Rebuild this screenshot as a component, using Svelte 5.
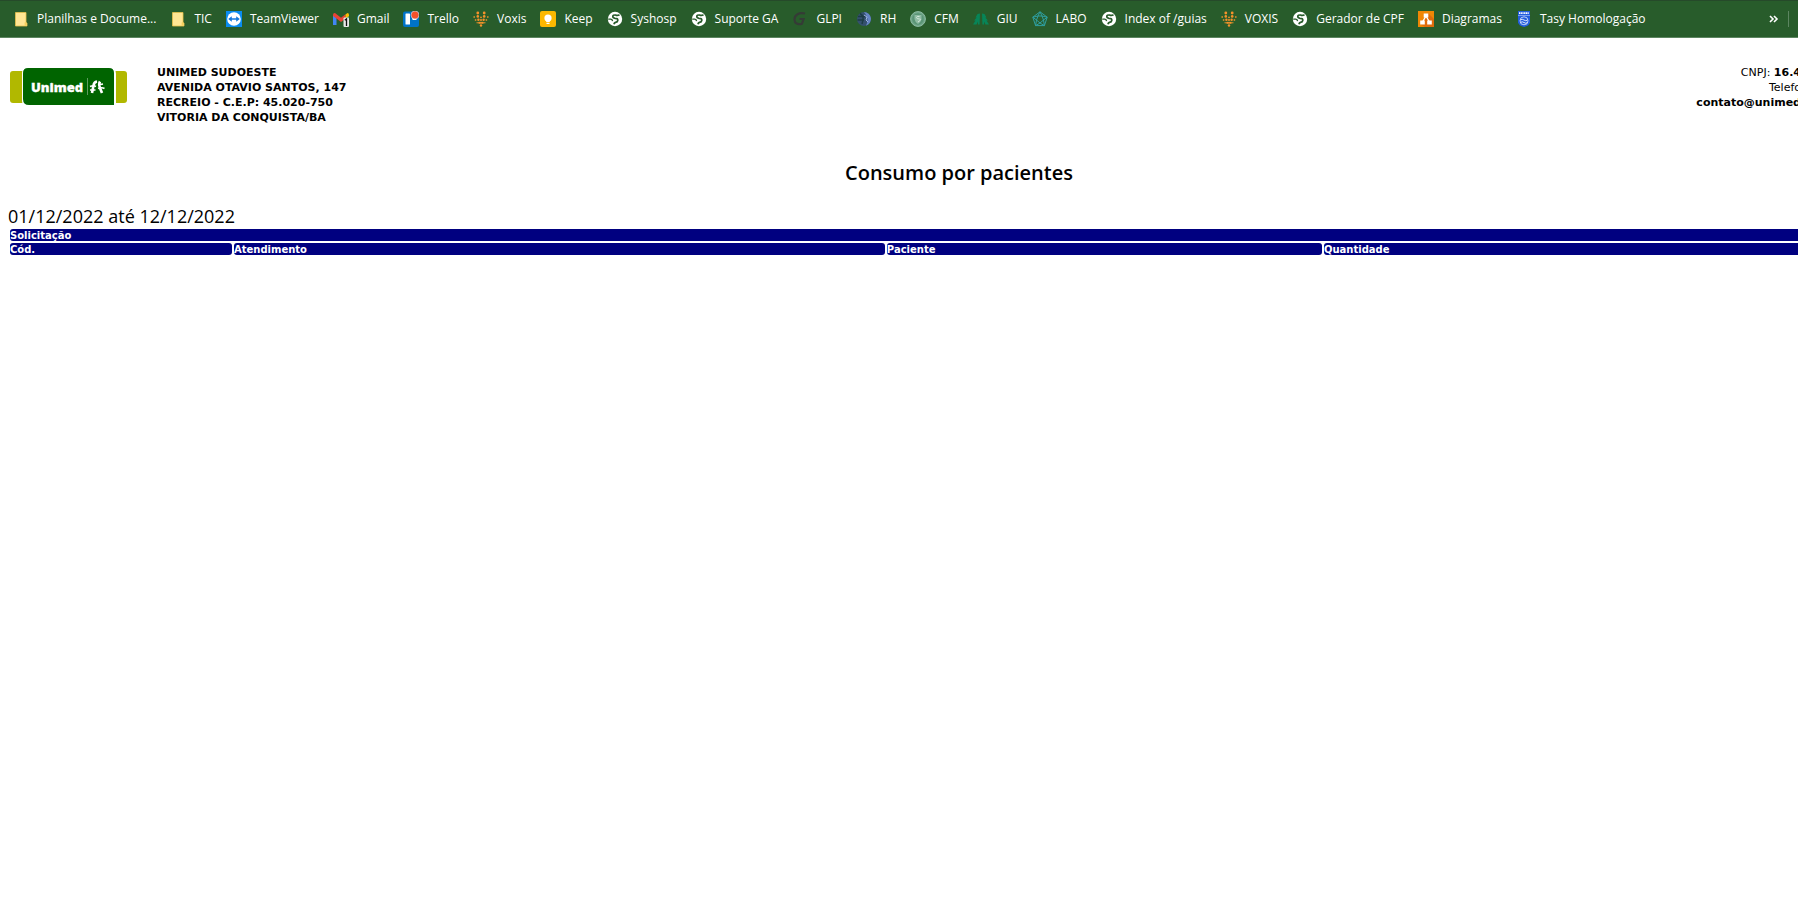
<script>
  const bookmarks = [
    { icon: 'folder', label: 'Planilhas e Docume...' },
    { icon: 'folder', label: 'TIC' },
    { icon: 'teamviewer', label: 'TeamViewer' },
    { icon: 'gmail', label: 'Gmail' },
    { icon: 'trello', label: 'Trello' },
    { icon: 'voxis', label: 'Voxis' },
    { icon: 'keep', label: 'Keep' },
    { icon: 'globe', label: 'Syshosp' },
    { icon: 'globe', label: 'Suporte GA' },
    { icon: 'glpi', label: 'GLPI' },
    { icon: 'rh', label: 'RH' },
    { icon: 'cfm', label: 'CFM' },
    { icon: 'giu', label: 'GIU' },
    { icon: 'labo', label: 'LABO' },
    { icon: 'globe', label: 'Index of /guias' },
    { icon: 'voxis', label: 'VOXIS' },
    { icon: 'globe', label: 'Gerador de CPF' },
    { icon: 'diagram', label: 'Diagramas' },
    { icon: 'tasy', label: 'Tasy Homologação' }
  ];
  const address = [
    'UNIMED SUDOESTE',
    'AVENIDA OTAVIO SANTOS, 147',
    'RECREIO - C.E.P: 45.020-750',
    'VITORIA DA CONQUISTA/BA'
  ];
</script>

{#snippet glyph(name)}
  <svg class="glyph" viewBox="0 0 16 16" aria-hidden="true">
    {#if name === 'folder'}
      <path d="M2.500 1.500h10.500v10.500H14V15H2.500z" fill="#ffe694" stroke="#e9c24c" stroke-width=".8" />
      <path d="M11.600 14.600v-3.200h2v3.200z" fill="#f5cf5c" />
    {:else if name === 'teamviewer'}
      <rect width="16" height="16" fill="#0a8cf0" />
      <circle cx="8" cy="8" r="6.800" fill="#fff" />
      <path d="M2.200 8l3.600-2.800v2h4.400v-2L13.800 8l-3.600 2.800v-2H5.800v2z" fill="#1479dc" />
    {:else if name === 'gmail'}
      <path d="M0 3.500V14h3.500V7z" fill="#4285f4" />
      <path d="M12.500 7L16 4v10h-3.500z" fill="#34a853" />
      <path d="M0 4Q0 1.800 2 2l6 4.800 4.500-3.500V7.500L8 11 3.500 7.500 0 5z" fill="#ea4335" />
      <path d="M12.500 3.500L14.500 2Q16 2 16 4v1l-3.500 2.800z" fill="#fbbc04" />
      <rect x="10.500" y="6.500" width="5.500" height="9.500" rx="1" fill="#e8e8e8" />
      <path d="M11.800 9.200l1.700-1.400V15" fill="none" stroke="#111" stroke-width="1.300" />
    {:else if name === 'trello'}
      <rect y=".5" width="16" height="15.500" rx="2" fill="#0073c6" />
      <rect x="2.500" y="2.500" width="4.500" height="11" rx=".6" fill="#fff" />
      <path d="M9 3h4.500v6H10L9 8z" fill="#fff" />
      <circle cx="12" cy="4" r="4" fill="#f4512c" stroke="#cfe0ee" stroke-width=".6" />
    {:else if name === 'voxis'}
      <g fill="#f5922a">
        <circle cx="8" cy="14.500" r="1.200" /><circle cx="8" cy="11.800" r="1.100" /><circle cx="8" cy="9" r="1" /><circle cx="8" cy="6.300" r=".9" />
        <circle cx="6.200" cy="11.800" r="1.100" /><circle cx="5.400" cy="8.800" r="1.200" /><circle cx="4.800" cy="5.400" r="1.300" /><circle cx="4.800" cy="2" r="1.400" />
        <circle cx="9.800" cy="11.800" r="1.100" /><circle cx="10.600" cy="8.800" r="1.200" /><circle cx="11.200" cy="5.400" r="1.300" /><circle cx="11.200" cy="2" r="1.400" />
      </g>
      <g fill="#c98b2b">
        <circle cx="1.200" cy="6" r=".9" /><circle cx="2.600" cy="9" r=".9" /><circle cx="4.200" cy="11.800" r=".8" />
        <circle cx="14.800" cy="6" r=".9" /><circle cx="13.400" cy="9" r=".9" /><circle cx="11.800" cy="11.800" r=".8" />
      </g>
    {:else if name === 'keep'}
      <rect width="16" height="16" rx="2" fill="#fbb800" />
      <circle cx="8" cy="7" r="3.600" fill="#fff" />
      <path d="M6.200 9h3.600v2H6.200zM6.500 11.800h3V13h-3z" fill="#fff" />
    {:else if name === 'globe'}
      <circle cx="8" cy="8" r="7.200" fill="#fff" />
      <path d="M12.500 3.800Q10.500 5 8.500 4 5.800 3.800 5.800 5.600q0 1.600 2.200 1.700 3 0 2.800 2Q10.600 11 8.500 11.400q-1.200.4-1.600 1.800" fill="none" stroke="#285c2b" stroke-width="1.700" />
      <path d="M1.200 8.200h2.600q1.600.3 1.800 2" fill="none" stroke="#285c2b" stroke-width="1.300" />
    {:else if name === 'glpi'}
      <path d="M13 2.500C7 1 2.500 4 2.500 8.500c0 4 3 5.500 7.500 4.200L11.500 8H7.500" fill="none" stroke="#353b36" stroke-width="2.200" />
    {:else if name === 'rh'}
      <circle cx="8" cy="8" r="7" fill="#34506e" />
      <path d="M8 1a7 7 0 0 1 2 13.700Q14 8 8 1z" fill="#6685c4" />
      <path d="M2 5.500h7M1.500 9H8M4 2.500Q9 5 6 13" fill="none" stroke="#1d3b45" stroke-width="1.500" />
      <path d="M8 4l3 2-1 3 2 2" fill="none" stroke="#9db4e2" />
    {:else if name === 'cfm'}
      <circle cx="8" cy="8" r="7.400" fill="#6fa488" stroke="#8dbba2" stroke-width="1" />
      <circle cx="8" cy="8" r="5.800" fill="#5b9576" />
      <path d="M4.500 4h7v4Q11 11 8 13 5 11 4.500 8z" fill="#8fbca3" />
      <path d="M9.500 5.500q-3-.5-3 1t3 1.500-1.500 3" fill="none" stroke="#d4e6db" />
    {:else if name === 'giu'}
      <g fill="#078558">
        <path d="M7 2.500L4.500 3 2.500 6.500h1.200L1 9.500h1.500L0 13.500h3.600L5 10.500v3h1.600z" />
        <path d="M9 2.500l2.500.5 2 3.500h-1.200l2.700 3h-1.500l2.500 4h-3.600l-1.400-3v3H9.400z" />
      </g>
    {:else if name === 'labo'}
      <g fill="none" stroke="#2f9fa0" stroke-width="1">
        <path d="M8 .8L15.200 6.200 12.400 14.600H3.600L.8 6.200z" />
        <path d="M8 .8l2 4.200 5.200 1.200L11.500 9l.9 5.600L8 12l-4.400 2.600L4.500 9 .8 6.200 6 5z" />
        <path d="M6 5h4l1.500 4L8 12 4.500 9z" />
      </g>
    {:else if name === 'diagram'}
      <rect width="16" height="16" fill="#f08705" />
      <path d="M10 2l6 6v8H7l-5-3z" fill="#df6c0c" />
      <path d="M8 5L4.500 11M8 5l3.500 6" stroke="#fff" stroke-width="1.400" />
      <path d="M5.700 2.500h4.600v4H5.700zM2.200 9.500h4.600v4H2.200zM9.200 9.500h4.600v4H9.200z" fill="#fff" />
    {:else}
      <path d="M2 0h12v11.500Q13 15 8 16 3 15 2 11.500z" fill="#225ddd" />
      <path d="M3 2.200h10" stroke="#fff" stroke-width="1.800" stroke-dasharray="1.200 .5" />
      <path d="M2 4.500h12" stroke="#8fb0f5" stroke-width=".8" />
      <circle cx="8" cy="9.800" r="4" fill="none" stroke="#b9ccf7" />
      <path d="M4.500 9q1.700-1.500 3.500 0t3.500 0M4.500 11.500q1.700-1.500 3.500 0t3.500 0" fill="none" stroke="#dce6ff" />
    {/if}
  </svg>
{/snippet}

<nav class="bookmarks" aria-label="Favoritos">
  <ul>
    {#each bookmarks as item}
      <li><a href="#top">{@render glyph(item.icon)}<span>{item.label}</span></a></li>
    {/each}
  </ul>
  <button class="more" aria-label="Mais favoritos">
    <svg viewBox="0 0 10 8" aria-hidden="true"><path d="M1 1l3 3-3 3M5 1l3 3-3 3" /></svg>
  </button>
</nav>

<main>
  <header>
    <svg class="logo" viewBox="0 0 118 40" role="img" aria-label="Unimed">
      <rect x="0" y="4" width="20" height="32" rx="3" fill="#b1b800" />
      <rect x="98" y="4" width="19" height="32" rx="3" fill="#b1b800" />
      <path d="M17 0H101Q106 1 106 7V40H18Q12 39 12 34V6Q12 1 17 0z" fill="#fff" />
      <path d="M18 1H99Q104 1 104 6V38H19Q13 38 13 32V6Q13 1 18 1z" fill="#006400" />
      <text x="21" y="25">Unimed</text>
      <path d="M77.500 11v17" stroke="#5d9b5d" />
      <g fill="none" stroke="#fff">
        <path d="M87 14.500Q84 15 83.500 18.500L82 26M90 14.500Q88.500 17 90 21l2 5" stroke-width="2.600" />
        <path d="M80 19.500q3.500-1.500 6 0M80 23h5.500M88 18l5-1M88 21.500q4-1.500 6.500 0" stroke-width="1.600" />
      </g>
    </svg>
    <address>
      {#each address as line}<div>{line}</div>{/each}
    </address>
    <div class="contact">
      <div>CNPJ: <b>16.4</b></div>
      <div>Telefo</div>
      <div><b>contato@unimed</b></div>
    </div>
  </header>

  <div class="report">
    <h1>Consumo por pacientes</h1>
    <p>01/12/2022 até 12/12/2022</p>
    <table>
      <colgroup><col class="code" /><col class="visit" /><col class="patient" /><col /></colgroup>
      <thead>
        <tr><th colspan="4">Solicitação</th></tr>
        <tr><th>Cód.</th><th>Atendimento</th><th>Paciente</th><th>Quantidade</th></tr>
      </thead>
    </table>
  </div>
</main>

<style>
  :global(body) { background: #fff; overflow-x: hidden; }
  .bookmarks {
    display: flex;
    align-items: center;
    justify-content: space-between;
    box-sizing: border-box;
    height: 38px;
    padding: 0 9px 0 13px;
    background: #285c2b;
    border-top: 1px solid #264a2a;
    border-bottom: 1px solid #5c8560;
    font: 12px/16px "Open Sans", sans-serif;
  }
  ul { display: flex; gap: 14px; margin: 0; padding: 0; list-style: none; }
  a { display: flex; align-items: center; gap: 8px; color: #fff; text-decoration: none; white-space: nowrap; }
  .glyph { width: 16px; height: 16px; flex: none; }
  .more { padding: 4px 9px 4px 0; border: 0; border-right: 1px solid #5c8560; background: none; line-height: 0; }
  .more svg { width: 10px; height: 8px; fill: none; stroke: #fff; stroke-width: 1.600; }

  main { overflow: hidden; color: #000; }
  header { display: flex; padding: 27px 0 0 10px; font: 11px/15px "DejaVu Sans", Verdana, sans-serif; }
  .logo { width: 118px; height: 40px; margin: 2px 29px 0 0; }
  .logo text { font: 800 13px "Open Sans", sans-serif; fill: #fff; stroke: #fff; stroke-width: .3; }
  address { font-style: normal; font-weight: bold; }
  .contact { margin: 0 -3px 0 auto; text-align: right; white-space: nowrap; }

  .report { width: calc(100% + 120px); }
  h1 { margin: 33px 0 0; text-align: center; font: 600 20px/30px "Open Sans", sans-serif; }
  p { margin: 17px 0 0 8px; font: 18px/22px "Open Sans", sans-serif; }
  table { width: calc(100% - 16px); margin-left: 8px; border-spacing: 2px; table-layout: fixed; }
  .code { width: 222px; }
  .visit { width: 34.4%; }
  .patient { width: 23%; }
  th {
    padding: 1px 0 0;
    border-radius: 3px;
    background: #000080;
    color: #fff;
    text-align: left;
    font: bold 10px/11px "DejaVu Sans", Verdana, sans-serif;
  }
</style>
